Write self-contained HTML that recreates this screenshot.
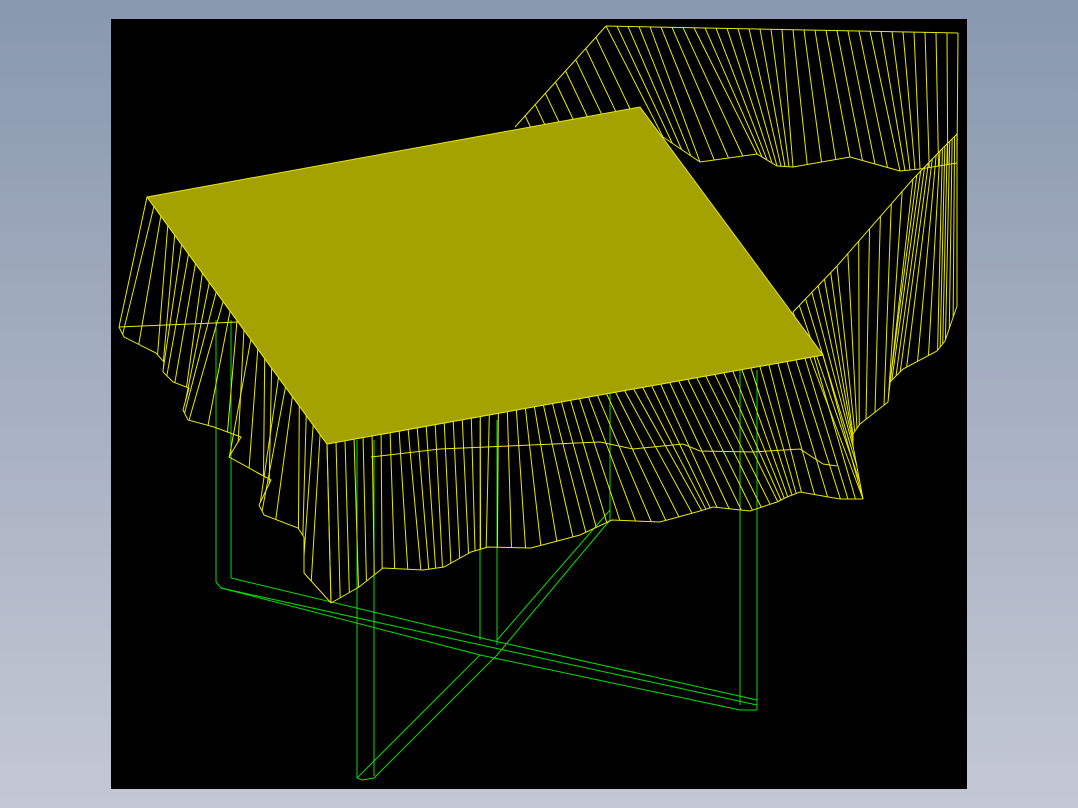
<!DOCTYPE html>
<html><head><meta charset="utf-8"><style>
html,body{margin:0;padding:0;width:1078px;height:808px;overflow:hidden;background:linear-gradient(#8898ae,#c4c8d4);}
svg{position:absolute;left:0;top:0}
</style></head><body>
<svg width="1078" height="808" viewBox="0 0 1078 808">
<rect x="111" y="19" width="856" height="770" fill="#000"/>
<g id="g" fill="none" stroke-width="1"></g>
<polygon points="147,197 640,107 823,355 327,444" fill="#a3a200" stroke="#e8e800" stroke-width="1"/>
</svg>
<script>
var g=document.getElementById('g'),NS='http://www.w3.org/2000/svg';
function el(t,a){var e=document.createElementNS(NS,t);for(var k in a)e.setAttribute(k,a[k]);g.appendChild(e);return e;}
function interp(pts,t){var n=pts.length-1,f=t*n,i=Math.min(Math.floor(f),n-1),u=f-i;return [pts[i][0]+(pts[i+1][0]-pts[i][0])*u,pts[i][1]+(pts[i+1][1]-pts[i][1])*u];}
function pl(pts,col){el('polyline',{points:pts.map(p=>p.join(',')).join(' '),stroke:col});}
function drape(top,bot,n,col){
 pl(bot,col);pl(top,col);
 for(var i=0;i<=n;i++){var a=interp(top,i/n),b=interp(bot,i/n);el('line',{x1:a[0],y1:a[1],x2:b[0],y2:b[1],stroke:col});}
}
var Y='#e8e800',G='#00e000';
// green legs
[[216,320,582],[231,320,578],[357,440,778],[374,440,776],[480,420,640],[497,420,645],[740,370,705],[757,370,710],[610,380,520]].forEach(function(v){el('line',{x1:v[0],y1:v[1],x2:v[0],y2:v[2],stroke:G});});
pl([[216,582],[221,588],[490,647],[757,705]],G);
pl([[231,578],[490,640],[757,700]],G);
pl([[221,588],[480,655],[740,710],[757,710]],G);
pl([[357,778],[362,780],[374,778]],G);
pl([[357,778],[480,655]],G);
pl([[374,778],[497,655],[610,520]],G);
pl([[497,640],[610,510]],G);
// back drape lines seen below
pl([[119,327],[238,322]],Y);
pl([[371,457],[440,449],[531,445],[600,442],[633,449],[683,444],[700,451],[753,452],[800,449],[823,464],[837,466]],Y);
// upper band: left edge with parallel lines going under table
pl([[515,127],[606,26]],Y);
for(var i=1;i<9;i++){var x=515+91*i/9,y=127-101*i/9;el('line',{x1:x,y1:y,x2:x+50,y2:y+105,stroke:Y});}
drape([[606,26],[958,33]],[[663,137],[700,162],[757,154],[777,166],[793,167],[850,157],[900,171],[920,169],[957,163]],32,Y);
// right band
drape([[793,312],[837,266],[913,179],[940,151],[957,134]],[[863,499],[853,446],[853,434],[860,424],[888,402],[890,382],[903,369],[937,351],[945,341],[957,306]],28,Y);
// left drape
drape([[147,197],[327,444]],[[119,327],[124,337],[156,353],[164,362],[163,372],[173,382],[189,388],[183,410],[188,420],[214,427],[241,437],[229,457],[258,473],[271,480],[259,505],[264,515],[298,528],[304,537],[304,573],[331,603]],26,Y);
// front drape
drape([[327,444],[823,355]],[[331,603],[359,587],[383,568],[423,570],[444,567],[471,552],[488,547],[531,548],[580,535],[612,520],[660,522],[700,511],[713,507],[750,511],[777,502],[787,497],[800,492],[840,499],[863,499]],55,Y);
</script>
</body></html>
